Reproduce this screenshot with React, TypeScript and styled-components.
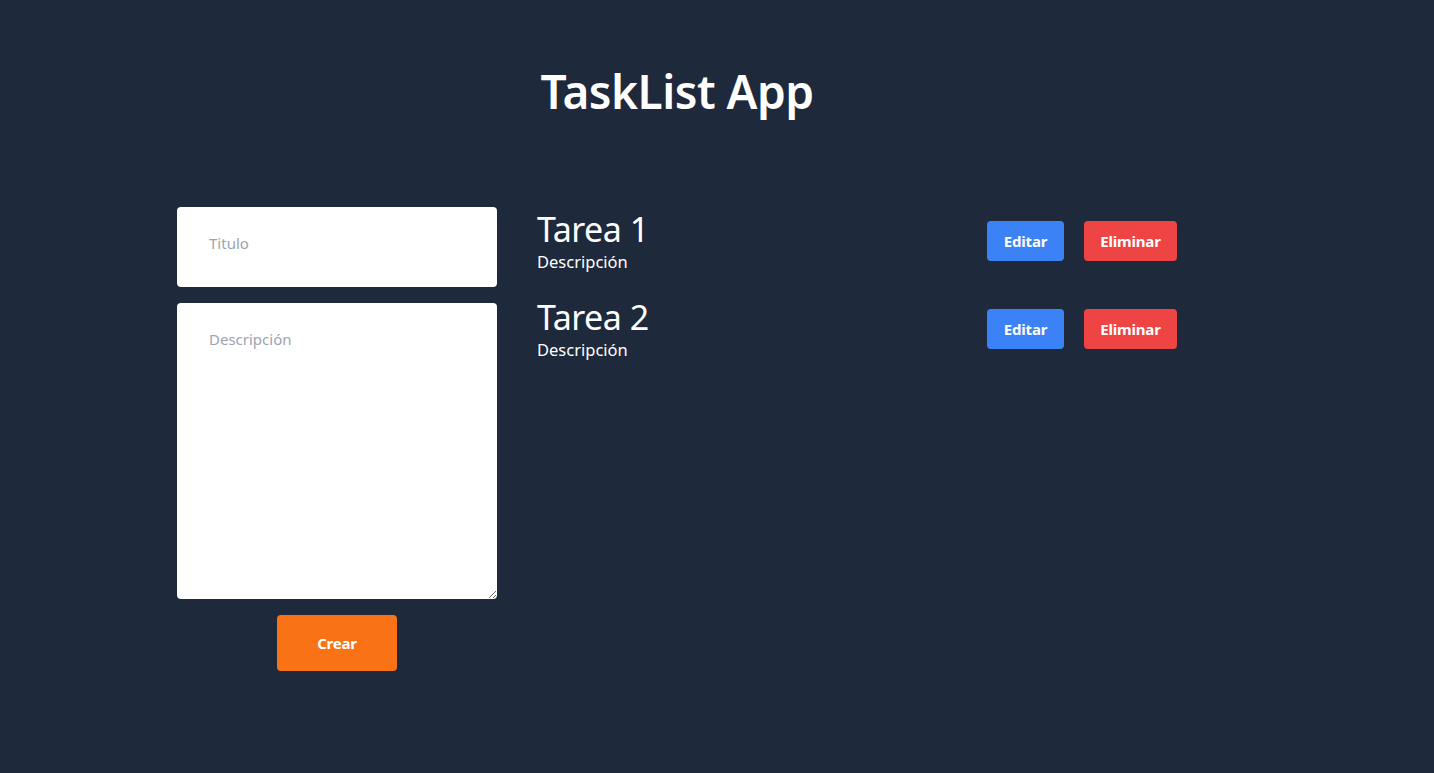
import React from "react";
import styled, { createGlobalStyle } from "styled-components";

const Global = createGlobalStyle`
  html, body { margin: 0; padding: 0; background: #1e293b; }
  body { font-family: "Noto Sans", "Open Sans", sans-serif; color: #fff; min-height: 773px; }
  * { box-sizing: border-box; }
`;

const Page = styled.div`
  min-height: 773px;
  background: #1e293b;
  padding: 59px 80px 0 0;
  display: flex;
  flex-direction: column;
  align-items: center;
`;

const Title = styled.h1`
  margin: 0;
  font-size: 46px;
  line-height: 64px;
  font-weight: 600;
  letter-spacing: -0.5px;
`;

const Main = styled.div`
  margin-top: 84px;
  width: 1000px;
  display: flex;
  gap: 40px;
  align-items: flex-start;
`;

const Form = styled.form`
  width: 320px;
  display: flex;
  flex-direction: column;
  gap: 16px;
  align-items: center;
`;

const fieldCss = `
  width: 320px;
  border: none;
  border-radius: 4px;
  background: #fff;
  padding: 0 32px;
  font-family: "Noto Sans", sans-serif;
  font-size: 15px;
  color: #111;
  outline: none;
  &::placeholder { color: #9ca3af; }
`;

const Input = styled.input`
  ${fieldCss}
  height: 80px;
  padding-bottom: 8px;
`;

const TextArea = styled.textarea`
  ${fieldCss}
  height: 296px;
  padding-top: 26px;
  resize: vertical;
  display: block;
`;

const Button = styled.button<{ $color: string; $w: number; $h: number }>`
  width: ${(p) => p.$w}px;
  height: ${(p) => p.$h}px;
  background: ${(p) => p.$color};
  color: #fff;
  border: none;
  border-radius: 4px;
  font-family: "Noto Sans", sans-serif;
  font-weight: 700;
  font-size: 15px;
  letter-spacing: -0.2px;
  cursor: pointer;
  padding: 0;
`;

const List = styled.div`
  flex: 1;
  display: flex;
  flex-direction: column;
  gap: 24px;
`;

const Row = styled.div`
  display: flex;
  align-items: center;
  justify-content: space-between;
  height: 64px;
`;

const TaskText = styled.div`
  display: flex;
  flex-direction: column;
  padding-top: 4px;
`;

const TaskTitle = styled.div`
  font-size: 34px;
  line-height: 40px;
  font-weight: 400;
  letter-spacing: -0.5px;
`;

const TaskDesc = styled.div`
  font-size: 16.5px;
  line-height: 24px;
  margin-top: 1px;
`;

const Actions = styled.div`
  display: flex;
  gap: 20px;
  margin-top: 4px;
`;

const tasks = [
  { title: "Tarea 1", desc: "Descripción" },
  { title: "Tarea 2", desc: "Descripción" },
];

export default function App() {
  return (
    <>
      <Global />
      <Page>
        <Title>TaskList App</Title>
        <Main>
          <Form onSubmit={(e) => e.preventDefault()}>
            <Input placeholder="Titulo" />
            <TextArea placeholder="Descripción" />
            <Button $color="#f97316" $w={120} $h={56} type="submit">Crear</Button>
          </Form>
          <List>
            {tasks.map((t) => (
              <Row key={t.title}>
                <TaskText>
                  <TaskTitle>{t.title}</TaskTitle>
                  <TaskDesc>{t.desc}</TaskDesc>
                </TaskText>
                <Actions>
                  <Button $color="#3b82f6" $w={77} $h={40}>Editar</Button>
                  <Button $color="#ef4444" $w={93} $h={40}>Eliminar</Button>
                </Actions>
              </Row>
            ))}
          </List>
        </Main>
      </Page>
    </>
  );
}
